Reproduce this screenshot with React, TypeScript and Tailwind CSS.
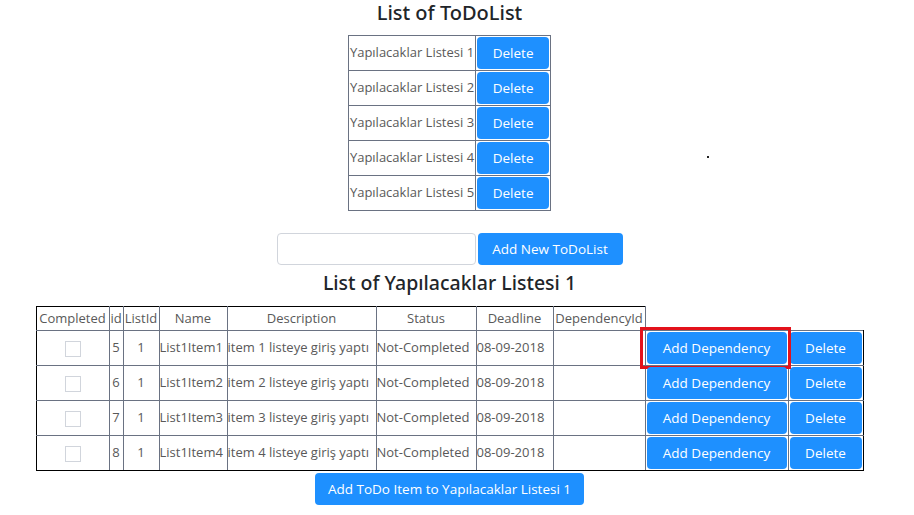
import React from "react";

const lists = [1, 2, 3, 4, 5].map((n) => `Yapılacaklar Listesi ${n}`);

const items = [
  { id: 5, name: "List1Item1", desc: "item 1 listeye giriş yaptı" },
  { id: 6, name: "List1Item2", desc: "item 2 listeye giriş yaptı" },
  { id: 7, name: "List1Item3", desc: "item 3 listeye giriş yaptı" },
  { id: 8, name: "List1Item4", desc: "item 4 listeye giriş yaptı" },
];

const colWidths = [73, 14, 36, 68, 149, 100, 77, 92, 143, 75];
const headers = ["Completed", "id", "ListId", "Name", "Description", "Status", "Deadline", "DependencyId"];

function BlueButton({ children, className = "" }: { children: React.ReactNode; className?: string }) {
  return (
    <button className={`h-[32px] rounded-[4px] bg-[#1e90ff] text-[13.5px] text-white ${className}`}>
      {children}
    </button>
  );
}

const cell = "border border-gray-500 whitespace-nowrap overflow-hidden px-0";
const title = { fontFamily: '"Noto Sans", "Open Sans", sans-serif' };

export default function App() {
  return (
    <div
      className="relative w-[899px] bg-white text-[#595959] flex flex-col items-center"
      style={{ fontFamily: '"Open Sans", "Noto Sans", sans-serif' }}
    >
      <h1 className="pt-[1px] text-[20px] leading-[23px] font-medium text-[#212529]" style={title}>
        List of ToDoList
      </h1>

      {/* lists */}
      <table className="mt-[11px] border-collapse border border-black text-[13px]">
        <tbody>
          {lists.map((l) => (
            <tr key={l} className="h-[35px]">
              <td className="border border-gray-500 px-[1px] whitespace-nowrap">{l}</td>
              <td className="border border-gray-500 p-[1px]">
                <BlueButton className="w-[72px] block">Delete</BlueButton>
              </td>
            </tr>
          ))}
        </tbody>
      </table>

      <div className="mt-[22px] flex items-center gap-[2px]">
        <input className="h-[32px] w-[199px] rounded-[4px] border border-gray-300" />
        <BlueButton className="w-[145px]">Add New ToDoList</BlueButton>
      </div>

      <h2 className="mt-[2px] text-[19.5px] leading-[32px] font-medium text-[#212529]" style={title}>
        List of Yapılacaklar Listesi 1
      </h2>

      {/* items */}
      <table className="mt-[7px] table-fixed w-[827px] border-collapse text-[13px]">
        <colgroup>
          {colWidths.map((w, i) => (
            <col key={i} style={{ width: w }} />
          ))}
        </colgroup>
        <tbody>
          <tr className="h-[24px]">
            {headers.map((h, i) => (
              <td
                key={h}
                className={`${cell} text-center border-t-black ${i === 0 ? "border-l-black" : ""}`}
              >
                {h}
              </td>
            ))}
          </tr>
          {items.map((it, i) => (
            <tr key={it.id} className="h-[35px]">
              <td className={`${cell} text-center border-l-black ${i === 3 ? "border-b-black" : ""}`}>
                <span className="inline-block align-middle w-[16px] h-[16px] border border-gray-300 bg-white" />
              </td>
              <td className={`${cell} text-center ${i === 3 ? "border-b-black" : ""}`}>{it.id}</td>
              <td className={`${cell} text-center ${i === 3 ? "border-b-black" : ""}`}>1</td>
              <td className={`${cell} ${i === 3 ? "border-b-black" : ""}`}>{it.name}</td>
              <td className={`${cell} ${i === 3 ? "border-b-black" : ""}`}>{it.desc}</td>
              <td className={`${cell} ${i === 3 ? "border-b-black" : ""}`}>Not-Completed</td>
              <td className={`${cell} ${i === 3 ? "border-b-black" : ""}`}>08-09-2018</td>
              <td className={`${cell} ${i === 3 ? "border-b-black" : ""}`} />
              <td className={`relative border border-gray-500 p-[1px] ${i === 3 ? "border-b-black" : ""}`}>
                <BlueButton className="w-[140px] block">Add Dependency</BlueButton>
                {i === 0 && (
                  <span className="absolute left-[-6px] top-[-4px] w-[151px] h-[42px] border-[3px] border-[#e3121b]" />
                )}
              </td>
              <td className={`border border-gray-500 border-r-black p-[1px] ${i === 3 ? "border-b-black" : ""}`}>
                <BlueButton className="w-[72px] block">Delete</BlueButton>
              </td>
            </tr>
          ))}
        </tbody>
      </table>

      <BlueButton className="mt-[2px] w-[269px] h-[31px]">Add ToDo Item to Yapılacaklar Listesi 1</BlueButton>

      <span className="absolute left-[707px] top-[156px] w-[2px] h-[2px] bg-[#222]" />
    </div>
  );
}
